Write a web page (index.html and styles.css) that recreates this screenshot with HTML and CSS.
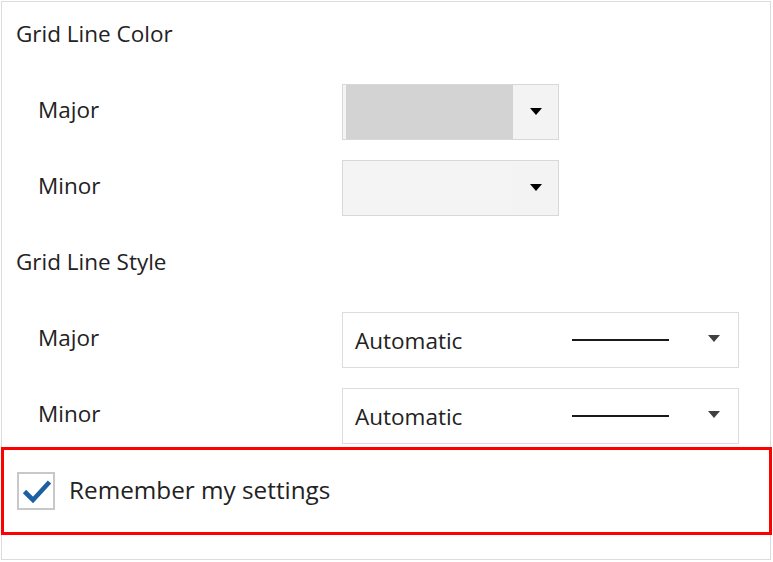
FILE: index.html
```html
<!DOCTYPE html>
<html lang="en">
<head>
<meta charset="utf-8">
<title>Grid Line Settings</title>
<link rel="stylesheet" href="styles.css">
</head>
<body>
<div class="panel">
  <div class="rows">
    <div class="row section-title">Grid Line Color</div>
    <div class="row">
      <span class="label">Major</span>
      <div class="color-combo">
        <span class="swatch swatch-major"></span>
        <span class="drop"><svg class="arrow" width="12" height="7" viewBox="0 0 12 7"><path d="M0 0H12L6 7Z" fill="#000"/></svg></span>
      </div>
    </div>
    <div class="row">
      <span class="label">Minor</span>
      <div class="color-combo">
        <span class="swatch swatch-minor"></span>
        <span class="drop"><svg class="arrow" width="12" height="7" viewBox="0 0 12 7"><path d="M0 0H12L6 7Z" fill="#000"/></svg></span>
      </div>
    </div>
    <div class="row section-title">Grid Line Style</div>
    <div class="row">
      <span class="label">Major</span>
      <div class="style-combo">
        <span class="style-text">Automatic</span>
        <span class="line-sample"></span>
        <svg class="arrow-small" width="12" height="7" viewBox="0 0 12 7"><path d="M0 0H12L6 7Z" fill="#404040"/></svg>
      </div>
    </div>
    <div class="row">
      <span class="label">Minor</span>
      <div class="style-combo">
        <span class="style-text">Automatic</span>
        <span class="line-sample"></span>
        <svg class="arrow-small" width="12" height="7" viewBox="0 0 12 7"><path d="M0 0H12L6 7Z" fill="#404040"/></svg>
      </div>
    </div>
  </div>
  <div class="remember">
    <span class="checkbox"><svg width="34" height="34" viewBox="0 0 34 34"><path d="M5.5 17.5L14 26L30.5 8" fill="none" stroke="#1c5fa3" stroke-width="4.6" stroke-linejoin="miter"/></svg></span>
    <span class="remember-text">Remember my settings</span>
  </div>
</div>
</body>
</html>
```
FILE: styles.css
```css
html, body {
  margin: 0;
  padding: 0;
  background: #ffffff;
}

body {
  font-family: "Open Sans", "Noto Sans", sans-serif;
  font-size: 22.5px;
  color: #222222;
}

.panel {
  box-sizing: border-box;
  margin: 1px 0 0 1px;
  width: 770px;
  height: 559px;
  border: 1px solid #dcdcdc;
  padding-top: 6px;
}

.rows {
  display: flex;
  flex-direction: column;
  gap: 20px;
}

.row {
  height: 56px;
  display: flex;
  align-items: center;
}

.section-title {
  padding-left: 14px;
  padding-bottom: 6px;
  box-sizing: border-box;
}

.label {
  box-sizing: border-box;
  width: 340px;
  padding-left: 36px;
  padding-bottom: 5px;
}

.color-combo {
  box-sizing: border-box;
  width: 217px;
  height: 56px;
  border: 1px solid #d8d8d8;
  background: #f4f4f4;
  display: flex;
}

.swatch {
  flex: 1;
  margin-left: 3px;
}

.swatch-major {
  background: #d3d3d3;
}

.swatch-minor {
  background: #f4f4f4;
}

.drop {
  width: 45px;
  background: #f3f3f3;
  display: flex;
  align-items: center;
  justify-content: center;
}

.arrow {
  display: block;
  margin-top: -1px;
}

.style-combo {
  box-sizing: border-box;
  width: 397px;
  height: 56px;
  border: 1px solid #dcdcdc;
  background: #ffffff;
  display: flex;
  align-items: center;
  padding-left: 12px;
  padding-right: 18px;
}

.style-text {
  flex: 1;
}

.line-sample {
  width: 97px;
  height: 2px;
  background: #1a1a1a;
  margin-right: 39px;
}

.arrow-small {
  display: block;
  margin-top: -3px;
}

.remember {
  box-sizing: border-box;
  margin: 3px -2px 0 -1px;
  height: 88px;
  border: 3px solid #ff0000;
  display: flex;
  align-items: center;
  padding-left: 13px;
}

.checkbox {
  box-sizing: border-box;
  width: 38px;
  height: 38px;
  border: 2px solid #c8c8c8;
  background: #ffffff;
  display: flex;
}

.checkbox svg {
  display: block;
}

.remember-text {
  margin-left: 14px;
  font-size: 24.3px;
  padding-bottom: 3px;
}
```
